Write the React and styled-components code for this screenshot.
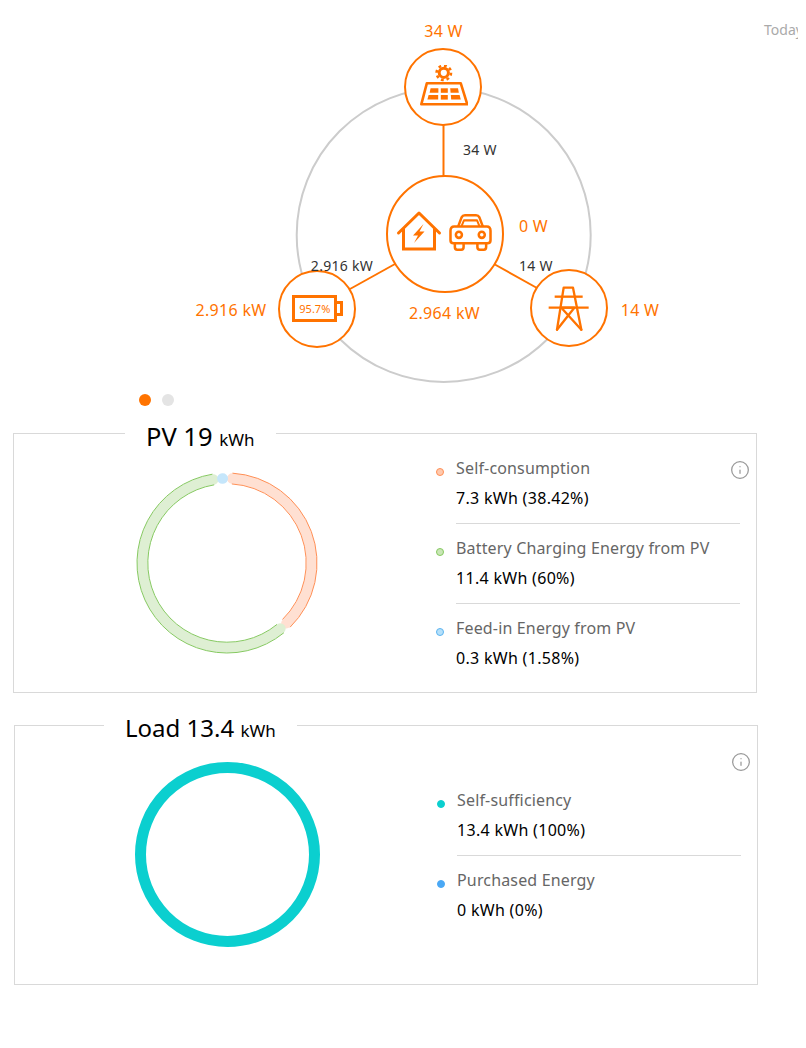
import styled, { createGlobalStyle } from "styled-components";
import { Info } from "lucide-react";

const ORANGE = "#ff7300";

const GlobalStyle = createGlobalStyle`
  body {
    margin: 0;
    background: #fff;
    font-family: "Noto Sans", "Open Sans", sans-serif;
    color: #000;
  }
`;

const Page = styled.div`
  width: 798px;
  height: 1048px;
  overflow: hidden;
`;

const Diagram = styled.div`
  position: relative;
  height: 385px;
`;

const Wires = styled.svg`
  position: absolute;
  left: 0;
  top: 0;
`;

const Node = styled.div`
  position: absolute;
  left: ${(p) => p.$x}px;
  top: ${(p) => p.$y}px;
  width: ${(p) => p.$size}px;
  height: ${(p) => p.$size}px;
  transform: translate(-50%, -50%);
  box-sizing: border-box;
  border: 2px solid ${ORANGE};
  border-radius: 50%;
  background: #fff;
  display: flex;
  align-items: center;
  justify-content: center;
  gap: ${(p) => p.$gap || 0}px;
`;

const FlowText = styled.span`
  position: absolute;
  left: ${(p) => p.$x}px;
  top: ${(p) => p.$y}px;
  transform: translate(-50%, -50%);
  white-space: nowrap;
  letter-spacing: 0.3px;
  font-size: ${(p) => (p.$dark ? 14 : 16)}px;
  color: ${(p) => (p.$dark ? "#333" : ORANGE)};
`;

const TodayLink = styled.span`
  position: absolute;
  left: 764px;
  top: 20px;
  font-size: 14px;
  color: #aaa;
  white-space: nowrap;
`;

const Battery = styled.div`
  position: relative;
  width: 45px;
  height: 27px;
  margin: 0 5px 0 0;
  box-sizing: border-box;
  border: 3px solid ${ORANGE};
  display: flex;
  align-items: center;
  justify-content: center;
  font-size: 11px;
  color: ${ORANGE};

  &::after {
    content: "";
    position: absolute;
    right: -9px;
    top: 3px;
    width: 6px;
    height: 15px;
    border: 3px solid ${ORANGE};
    border-left: none;
    box-sizing: border-box;
  }
`;

const Pager = styled.div`
  height: 30px;
  padding-left: 139px;
  display: flex;
  align-items: center;
  gap: 11px;
`;

const PagerDot = styled.span`
  width: 12px;
  height: 12px;
  border-radius: 50%;
  background: ${(p) => (p.$active ? ORANGE : "#e4e4e4")};
`;

const Card = styled.section`
  position: relative;
  box-sizing: border-box;
  width: 744px;
  height: 260px;
  margin: ${(p) => p.$top}px 0 0 ${(p) => p.$left}px;
  border: 1px solid #d9d9d9;
  display: flex;
`;

const CardTitle = styled.h2`
  position: absolute;
  left: ${(p) => p.$left}px;
  top: -16px;
  margin: 0;
  padding: 0 21px;
  background: #fff;
  font-size: ${(p) => p.$size}px;
  font-weight: 400;
  line-height: 36px;
  white-space: nowrap;

  small {
    font-size: 17px;
  }
`;

const InfoButton = styled.span`
  position: absolute;
  right: 6px;
  top: 26px;
  display: flex;
  color: #999;
`;

const ChartArea = styled.div`
  width: 422px;
  padding-left: 4px;
  box-sizing: border-box;
  flex: none;
  display: flex;
  align-items: center;
  justify-content: center;
`;

const LoadRing = styled.div`
  width: 185px;
  height: 185px;
  margin: 0 2px 2px 0;
  box-sizing: border-box;
  border: 11px solid #0bcfcf;
  border-radius: 50%;
`;

const Legend = styled.ul`
  flex: 1;
  margin: 0;
  padding: ${(p) => p.$top}px 16px 0 0;
  list-style: none;
`;

const LegendRow = styled.li`
  display: flex;
`;

const LegendDot = styled.span`
  flex: none;
  width: 8px;
  height: 8px;
  margin: 24px 12px 0 0;
  border-radius: 50%;
  box-sizing: border-box;
  background: ${(p) => p.$fill};
  border: 1px solid ${(p) => p.$color};
`;

const LegendBody = styled.div`
  flex: 1;
  padding: 9px 0 10px;
  border-bottom: 1px solid ${(p) => (p.$last ? "transparent" : "#d9d9d9")};
`;

const LegendLabel = styled.div`
  font-size: 16px;
  line-height: 30px;
  letter-spacing: 0.16px;
  color: #666;
  white-space: nowrap;
`;

const LegendValue = styled.div`
  font-size: 16px;
  line-height: 30px;
  letter-spacing: 0.3px;
  color: #000;
  white-space: nowrap;
`;

function SolarIcon() {
  return (
    <svg width="50" height="44" viewBox="-1.8 2.2 50 44" fill="none" stroke={ORANGE}>
      <circle cx="24" cy="10" r="4.6" strokeWidth="3" />
      <circle cx="24" cy="10" r="7.2" strokeWidth="2.6" strokeDasharray="2.8 2.85" />
      <path d="M7 20.5H41L47.5 41.5H1.5Z" strokeWidth="2.6" strokeLinejoin="round" />
      <g fill={ORANGE} stroke="none">
        <path d="M10.8 25.5H18.6V30H9.8Z" />
        <path d="M21 25.5H28V30H21Z" />
        <path d="M30.4 25.5H38.2L39 30H30.8Z" />
        <path d="M8.8 32.2H18.4V36.8H7.6Z" />
        <path d="M21 32.2H28V36.8H21Z" />
        <path d="M31 32.2H39.8L41 36.8H31.4Z" />
      </g>
    </svg>
  );
}

function HouseIcon() {
  return (
    <svg width="44" height="40" viewBox="0 3 44 40" fill="none" stroke={ORANGE} overflow="visible">
      <path d="M1.5 22L22 2L42.5 22" strokeWidth="3" strokeLinecap="round" strokeLinejoin="round" />
      <path d="M6.5 17.5V38H37.5V17.5" strokeWidth="3" />
      <path d="M26.5 13L16 24.5H21L17 32L27.5 20.5H22.5Z" fill={ORANGE} stroke="none" />
    </svg>
  );
}

function CarIcon() {
  return (
    <svg width="43" height="37" viewBox="0 3 127 110" fill="none" stroke={ORANGE} strokeWidth="7.5" strokeLinejoin="round" overflow="visible">
      <path d="M27 37L37 10Q40 4 47 4H80Q87 4 90 10L100 37" />
      <path d="M37 36L44 19H83L90 36" strokeWidth="6" />
      <path d="M15 37H112Q123 37 123 50V78Q123 87 114 87H13Q4 87 4 78V50Q4 37 15 37Z" />
      <path d="M17 88V98Q17 106 24 106H36Q43 106 43 98V88" />
      <path d="M84 88V98Q84 106 91 106H103Q110 106 110 98V88" />
      <circle cx="29" cy="62" r="9" />
      <circle cx="97" cy="62" r="9" />
    </svg>
  );
}

function TowerIcon() {
  return (
    <svg width="44" height="47" viewBox="0 0 132 141" fill="none" stroke={ORANGE} strokeWidth="7" strokeLinecap="round" strokeLinejoin="round">
      <path d="M30 134L50 8H78L103 134" />
      <path d="M30 134L82 68L43 68L103 134" />
      <path d="M23 35H107" strokeLinecap="butt" />
      <path d="M5 68H125" strokeLinecap="butt" />
    </svg>
  );
}

function polar(r, deg) {
  const a = (deg - 90) * (Math.PI / 180);
  return [93 + r * Math.cos(a), 93 + r * Math.sin(a)];
}

function arc(r, from, to) {
  const [x1, y1] = polar(r, from);
  const [x2, y2] = polar(r, to);
  const large = to - from > 180 ? 1 : 0;
  return `M${x1.toFixed(2)} ${y1.toFixed(2)}A${r} ${r} 0 ${large} 1 ${x2.toFixed(2)} ${y2.toFixed(2)}`;
}

const pvSlices = [
  { from: 3.5, to: 135.5, fill: "#ffe0d2", line: "#ff8f55" },
  { from: 140.8, to: 350.7, fill: "#deefd3", line: "#86c961" },
  { from: 356.8, to: 357.2, fill: "#c5e6fb", line: "#c5e6fb" },
];

function PvDonut() {
  return (
    <svg width="186" height="186" viewBox="0 0 186 186" fill="none">
      {pvSlices.map((s) => (
        <g key={s.from}>
          <path d={arc(84.6, s.from, s.to)} stroke={s.fill} strokeWidth="10.4" strokeLinecap="round" />
          {s.to - s.from > 1 && <path d={arc(90, s.from, s.to)} stroke={s.line} strokeWidth="1" />}
          {s.to - s.from > 1 && <path d={arc(79.2, s.from, s.to)} stroke={s.line} strokeWidth="1" />}
        </g>
      ))}
    </svg>
  );
}

const pvLegend = [
  { label: "Self-consumption", value: "7.3 kWh (38.42%)", fill: "#ffc9ae", color: "#ff8f55" },
  { label: "Battery Charging Energy from PV", value: "11.4 kWh (60%)", fill: "#c9e6b6", color: "#86c961" },
  { label: "Feed-in Energy from PV", value: "0.3 kWh (1.58%)", fill: "#b5e0fa", color: "#5cb4f0" },
];

const loadLegend = [
  { label: "Self-sufficiency", value: "13.4 kWh (100%)", fill: "#0bcfcf", color: "#0bcfcf" },
  { label: "Purchased Energy", value: "0 kWh (0%)", fill: "#4aa8f5", color: "#4aa8f5" },
];

function LegendList({ items, top }) {
  return (
    <Legend $top={top}>
      {items.map((item, i) => (
        <LegendRow key={item.label}>
          <LegendDot $fill={item.fill} $color={item.color} />
          <LegendBody $last={i === items.length - 1}>
            <LegendLabel>{item.label}</LegendLabel>
            <LegendValue>{item.value}</LegendValue>
          </LegendBody>
        </LegendRow>
      ))}
    </Legend>
  );
}

export default function App() {
  return (
    <Page>
      <GlobalStyle />
      <Diagram>
        <Wires width="798" height="385" fill="none">
          <circle cx="443.7" cy="235" r="147" stroke="#ccc" strokeWidth="2" />
          <path d="M443.5 125V176" stroke={ORANGE} strokeWidth="2" />
          <path d="M350 289L395 264" stroke={ORANGE} strokeWidth="2" />
          <path d="M494 264L537 288" stroke={ORANGE} strokeWidth="2" />
        </Wires>

        <Node $x={443.2} $y={87.2} $size={78}>
          <SolarIcon />
        </Node>
        <Node $x={444.8} $y={233.5} $size={118} $gap={8}>
          <HouseIcon />
          <CarIcon />
        </Node>
        <Node $x={317.3} $y={308.5} $size={78}>
          <Battery>95.7%</Battery>
        </Node>
        <Node $x={568.8} $y={308} $size={78}>
          <TowerIcon />
        </Node>

        <FlowText $x={443.5} $y={31}>34 W</FlowText>
        <FlowText $x={480} $y={149} $dark>34 W</FlowText>
        <FlowText $x={533.5} $y={226}>0 W</FlowText>
        <FlowText $x={536} $y={265} $dark>14 W</FlowText>
        <FlowText $x={640} $y={310}>14 W</FlowText>
        <FlowText $x={444.5} $y={313}>2.964 kW</FlowText>
        <FlowText $x={231} $y={310}>2.916 kW</FlowText>
        <FlowText $x={342} $y={265} $dark>2.916 kW</FlowText>
        <TodayLink>Today</TodayLink>
      </Diagram>

      <Pager>
        <PagerDot $active />
        <PagerDot />
      </Pager>

      <Card $top={18} $left={13}>
        <CardTitle $left={111} $size={25.5}>PV 19 <small>kWh</small></CardTitle>
        <InfoButton><Info size={20} strokeWidth={1.5} /></InfoButton>
        <ChartArea><PvDonut /></ChartArea>
        <LegendList items={pvLegend} top={10} />
      </Card>

      <Card $top={32} $left={14}>
        <CardTitle $left={89} $size={24}>Load 13.4 <small>kWh</small></CardTitle>
        <InfoButton><Info size={20} strokeWidth={1.5} /></InfoButton>
        <ChartArea><LoadRing /></ChartArea>
        <LegendList items={loadLegend} top={50} />
      </Card>
    </Page>
  );
}
